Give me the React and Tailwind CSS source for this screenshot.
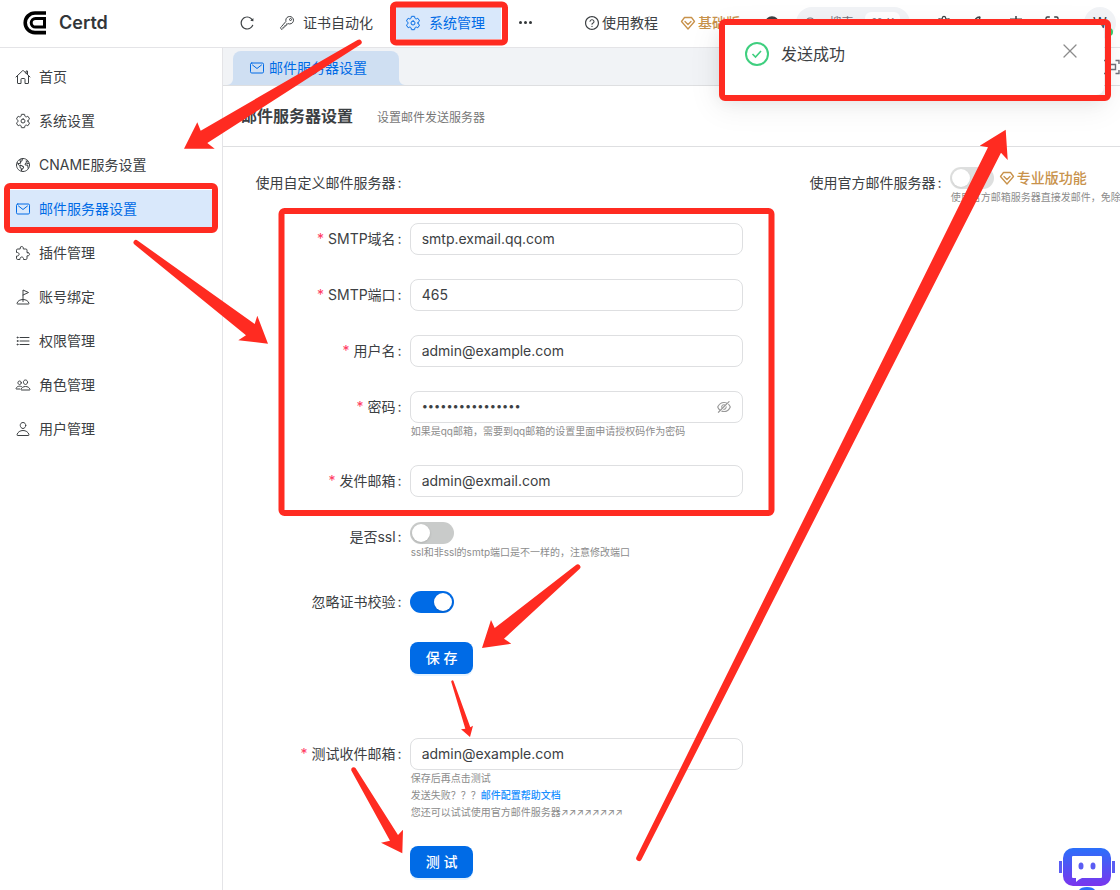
import React from 'react';
import {
  IoHomeOutline,
  IoSettingsOutline,
  IoEarthOutline,
  IoMailOutline,
  IoExtensionPuzzleOutline,
  IoGolfOutline,
  IoListOutline,
  IoPeopleOutline,
  IoPersonOutline,
  IoKeyOutline,
} from 'react-icons/io5';
import { AiOutlineQuestionCircle, AiOutlineReload, AiOutlineEyeInvisible, AiFillGithub } from 'react-icons/ai';
import { Search, Settings, Moon, Maximize, X } from 'lucide-react';

const menus = [
  { title: '首页', icon: IoHomeOutline },
  { title: '系统设置', icon: IoSettingsOutline },
  { title: 'CNAME服务设置', icon: IoEarthOutline },
  { title: '邮件服务器设置', icon: IoMailOutline, active: true },
  { title: '插件管理', icon: IoExtensionPuzzleOutline },
  { title: '账号绑定', icon: IoGolfOutline },
  { title: '权限管理', icon: IoListOutline },
  { title: '角色管理', icon: IoPeopleOutline },
  { title: '用户管理', icon: IoPersonOutline },
];

const Logo = () => (
  <svg className="h-6 w-6 shrink-0" viewBox="0 0 24 24" fill="none" stroke="#000">
    <path d="M23 2H12a9.800 9.800 0 0 0 0 19.600h11" strokeWidth="3.600" />
    <path d="M23 7.500H12.500a4.300 4.300 0 0 0 0 8.600H21.500V7.500" strokeWidth="3" />
  </svg>
);

const VipIcon = () => (
  <svg className="h-4 w-4 shrink-0" viewBox="0 0 16 16" fill="none" stroke="currentColor" strokeWidth="1.300" strokeLinejoin="round">
    <path d="M4.500 2.500h7L14.500 6.500 8 14 1.500 6.500z" />
    <path d="M5 6.500 8 9.500l3-3" strokeLinecap="round" />
  </svg>
);

const LanguageIcon = () => (
  <svg className="h-4 w-4" viewBox="0 0 16 16" fill="none" stroke="currentColor" strokeWidth="1.500">
    <path d="M8 1v3M2 4.200h12M4 5c1 4 4 7.500 9 9M12 5c-1 4-4 7.500-9 9" />
  </svg>
);

const Header = () => (
  <header className="flex h-12 items-center overflow-hidden border-b border-[#e4e4e7] pb-[2px] whitespace-nowrap">
    <a href="#" className="flex w-[231px] shrink-0 items-center gap-3 pl-[23px]">
      <Logo />
      <span className="text-lg font-semibold text-[#323639]">Certd</span>
    </a>
    <button aria-label="刷新" className="flex h-8 w-8 shrink-0 items-center justify-center">
      <AiOutlineReload className="h-4 w-4" />
    </button>
    <nav className="ml-4 flex shrink-0 items-center">
      <a href="#" className="flex h-8 items-center gap-2">
        <IoKeyOutline className="h-4 w-4" />
        证书自动化
      </a>
      <a href="#" className="ml-[23px] flex h-8 items-center gap-2 bg-[#d9e8fb] pr-4 pl-[9px] text-[#006be6]">
        <IoSettingsOutline className="h-4 w-4" />
        系统管理
      </a>
      <button aria-label="更多" className="ml-4 flex w-4 items-center justify-center gap-[2px]">
        <span className="h-[3px] w-[3px] rounded-full bg-[#323639]" />
        <span className="h-[3px] w-[3px] rounded-full bg-[#323639]" />
        <span className="h-[3px] w-[3px] rounded-full bg-[#323639]" />
      </button>
    </nav>
    <div className="ml-auto flex shrink-0 items-center pr-1">
      <a href="#" className="flex items-center gap-[2px]">
        <AiOutlineQuestionCircle className="h-4 w-4" />
        使用教程
      </a>
      <a href="#" className="ml-[22px] flex items-center gap-[2px] font-medium text-[#c8924b]">
        <VipIcon />
        基础版
      </a>
      <button aria-label="GitHub" className="ml-6 flex w-4 justify-center">
        <AiFillGithub className="h-4 w-4" />
      </button>
      <button className="ml-4 flex h-8 w-[114px] items-center gap-3 rounded-2xl bg-[#f1f3f6] pr-[10px] pl-2 text-xs text-[#71717a]">
        <Search className="h-4 w-4" />
        搜索
        <kbd className="rounded-md bg-white px-[6px] py-[3px] font-sans">⌘ K</kbd>
      </button>
      <div className="ml-[26px] flex items-center gap-5">
        <Settings className="h-4 w-4" />
        <Moon className="h-4 w-4" />
        <LanguageIcon />
        <Maximize className="h-4 w-4" />
      </div>
      <div className="relative ml-6 flex h-8 w-8 items-center justify-center rounded-full bg-[#f1f3f6] text-sm">
        W
        <span className="absolute right-[3px] bottom-[3px] h-2 w-2 rounded-full bg-[#3bc96b]" />
      </div>
    </div>
  </header>
);

const Sidebar = () => (
  <aside className="w-[223px] shrink-0 border-r border-[#e4e4e7] pt-[10px]">
    <ul className="flex flex-col gap-[6px] px-[10px]">
      {menus.map(({ title, icon: Icon, active }) => (
        <li key={title}>
          <a href="#" className={`flex h-[38px] items-center gap-2 pl-[5px] ${active ? 'bg-[#d9e8fb] text-[#006be6]' : ''}`}>
            <Icon className="h-4 w-4" />
            {title}
          </a>
        </li>
      ))}
    </ul>
  </aside>
);

const TabCurve = ({ className }) => (
  <svg className={`absolute bottom-0 h-[6px] w-[6px] ${className}`} viewBox="0 0 6 6" fill="#cfdff2">
    <path d="M6 0v6H0a6 6 0 0 0 6-6z" />
  </svg>
);

const TabBar = () => (
  <div className="flex h-[38px] items-end border-b border-[#dedfe1] bg-[#f1f3f6] pl-[10px]">
    <a href="#" className="relative flex h-[34px] items-center gap-1 rounded-t-lg bg-[#cfdff2] pr-8 pl-4 text-[#006be6]">
      <TabCurve className="-left-[6px]" />
      <IoMailOutline className="h-4 w-4" />
      邮件服务器设置
      <TabCurve className="-right-[6px] -scale-x-100" />
    </a>
    <button aria-label="全屏" className="ml-auto flex h-full w-9 items-center justify-end border-l border-[#dedfe1] bg-white text-[#71717a]">
      <svg className="h-4 w-5" viewBox="0 0 20 16" fill="none" stroke="currentColor" strokeWidth="1.400">
        <path d="M6 1.500H2.500V5M2.500 11v3.500H6M15.500 1.500H19V5M19 11v3.500h-3.500M6 5.500h9.500v5H6z" />
      </svg>
    </button>
  </div>
);

const FormRow = ({ label, required, htmlFor, className = 'mb-6', children }) => (
  <div className={`flex ${className}`}>
    <div className="flex h-8 w-1/3 shrink-0 items-center justify-end pr-2 whitespace-nowrap">
      {required && <span className="mr-1 text-[#ff3860]">*</span>}
      {label && <label htmlFor={htmlFor}>{label}</label>}
      {label && <span className="ml-[2px]">:</span>}
    </div>
    <div className="w-2/3">{children}</div>
  </div>
);

const TextInput = ({ className = 'text-sm', ...props }) => (
  <input
    {...props}
    className={`block h-8 w-full rounded-lg border border-[#dedfe1] bg-white px-[11px] pb-[2px] outline-none ${className}`}
  />
);

const Switch = ({ id, defaultChecked }) => (
  <span className="relative inline-block h-[22px] w-11 align-top">
    <input
      id={id}
      type="checkbox"
      role="switch"
      defaultChecked={defaultChecked}
      className="peer block h-full w-full appearance-none rounded-full bg-[#c9cbca] checked:bg-[#006be6]"
    />
    <span className="pointer-events-none absolute top-[2px] left-[2px] h-[18px] w-[18px] rounded-full bg-white shadow peer-checked:left-6" />
  </span>
);

const Helper = ({ children }) => (
  <div className="pb-px pl-px text-[10px] leading-[17px] whitespace-nowrap text-[#8c8c8c]">{children}</div>
);

const PrimaryButton = ({ children }) => (
  <button type="button" className="block h-8 rounded-lg bg-[#006be6] px-4 font-medium text-white shadow-[0_2px_0_#e6f4ff]">
    {children}
  </button>
);

const EmailForm = () => (
  <div className="grid min-w-[1080px] grid-cols-2">
    <form className="p-5">
      <FormRow label="使用自定义邮件服务器" />
      <FormRow label="SMTP域名" required htmlFor="host">
        <TextInput id="host" defaultValue="smtp.exmail.qq.com" />
      </FormRow>
      <FormRow label="SMTP端口" required htmlFor="port">
        <TextInput id="port" defaultValue="465" />
      </FormRow>
      <FormRow label="用户名" required htmlFor="user">
        <TextInput id="user" defaultValue="admin@example.com" />
      </FormRow>
      <FormRow label="密码" required htmlFor="pass">
        <div className="relative">
          <TextInput id="pass" type="password" className="text-[11px]" defaultValue="abcdefgh12345678" />
          <AiOutlineEyeInvisible className="absolute top-2 right-[11px] h-4 w-4 text-[#999]" />
        </div>
        <Helper>如果是qq邮箱，需要到qq邮箱的设置里面申请授权码作为密码</Helper>
      </FormRow>
      <FormRow label="发件邮箱" required htmlFor="sender">
        <TextInput id="sender" defaultValue="admin@exmail.com" />
      </FormRow>
      <FormRow label="是否ssl" htmlFor="ssl">
        <div className="pt-px">
          <Switch id="ssl" />
          <Helper>ssl和非ssl的smtp端口是不一样的，注意修改端口</Helper>
        </div>
      </FormRow>
      <FormRow label="忽略证书校验" htmlFor="ignore">
        <div className="flex h-8 items-center">
          <Switch id="ignore" defaultChecked />
        </div>
      </FormRow>
      <FormRow className="mb-16">
        <PrimaryButton>保 存</PrimaryButton>
      </FormRow>
      <FormRow label="测试收件邮箱" required htmlFor="receiver">
        <TextInput id="receiver" defaultValue="admin@example.com" />
        <Helper>
          <p>保存后再点击测试</p>
          <p>
            发送失败？？？
            <a href="#" className="font-medium text-[#1890ff]">邮件配置帮助文档</a>
          </p>
          <p>您还可以试试使用官方邮件服务器↗↗↗↗↗↗↗↗</p>
        </Helper>
      </FormRow>
      <FormRow className="mb-0">
        <PrimaryButton>测 试</PrimaryButton>
      </FormRow>
    </form>
    <form className="p-5">
      <FormRow label="使用官方邮件服务器" htmlFor="official">
        <div className="flex h-[22px] items-center gap-[5px]">
          <span className="opacity-60">
            <Switch id="official" />
          </span>
          <a href="#" className="flex items-center gap-[2px] font-medium text-[#c8924b]">
            <VipIcon />
            专业版功能
          </a>
        </div>
        <Helper>使用官方邮箱服务器直接发邮件，免除繁琐的配置</Helper>
      </FormRow>
    </form>
  </div>
);

const Notice = () => (
  <div role="alert" className="absolute top-6 right-4 flex h-[71px] w-96 rounded-lg bg-white pr-6 pl-[25px] pt-[18px] shadow-[0_6px_16px_rgba(0,0,0,0.08),0_9px_28px_8px_rgba(0,0,0,0.05)]">
    <svg className="h-6 w-6" viewBox="0 0 24 24" fill="none" stroke="#3fcf7f" strokeWidth="2">
      <circle cx="12" cy="12" r="11" />
      <path d="m7.500 12 3 3 5.500-6" strokeWidth="1.600" />
    </svg>
    <span className="ml-3 text-base">发送成功</span>
    <button aria-label="关闭" className="ml-auto flex h-[18px] w-5 items-center justify-center text-[#8c8c8c]">
      <X className="h-6 w-6 shrink-0" strokeWidth={1.3} />
    </button>
  </div>
);

const ChatRobot = () => (
  <svg className="fixed right-1 bottom-0 h-[43px] w-[58px]" viewBox="0 0 58 43">
    <defs>
      <linearGradient id="robot" x1="0" y1="0" x2="0" y2="1">
        <stop offset="0" stopColor="#2b70fa" />
        <stop offset="1" stopColor="#7a35ee" />
      </linearGradient>
    </defs>
    <rect x="1" y="14" width="3" height="12" fill="#5a5cf3" />
    <rect x="54" y="14" width="3" height="12" fill="#5a5cf3" />
    <rect x="5" y="1" width="48" height="38" rx="10" fill="url(#robot)" />
    <path d="M15 9h28q1 0 1 1v20q0 1-1 1H24q-3 1-6 4v-4h-3q-1 0-1-1V10q0-1 1-1z" fill="#fff" />
    <ellipse cx="23" cy="19" rx="2.500" ry="3.500" fill="#5a5cf3" />
    <ellipse cx="35" cy="19" rx="2.500" ry="3.500" fill="#5a5cf3" />
    <path d="M21 43q2-3 8-3t8 3z" fill="#2b70fa" />
  </svg>
);

// red frames and arrows of the tutorial, drawn over the page
const Annotations = () => (
  <svg className="pointer-events-none absolute top-0 left-0 h-[890px] w-[1120px]" viewBox="0 0 1120 890" fill="#ff2b21" stroke="#ff2b21">
    <g fill="none" strokeWidth="6">
      <rect x="393" y="4.500" width="112" height="38" rx="3" />
      <rect x="7" y="186" width="208" height="44" rx="3" />
      <rect x="281.500" y="211" width="490" height="302" rx="3" />
      <rect x="722" y="22" width="386" height="76" rx="3" />
    </g>
    <g stroke="none">
      <path d="M357.500 40 200.700 130.700 197.300 122.300 184 148.700H214.700L207.300 143 360.500 44.500A2.500 2.500 0 0 0 357.500 40z" />
      <path d="M137.500 240.500 254.700 324 257.300 315.700 268 343.700 238.300 340.300 246 335.300 134.500 244.500A2.500 2.500 0 0 1 137.500 240.500z" />
      <path d="M576 565 494.700 628 491 620 482 648 511.300 643.700 504 638.700 579.500 569A2.500 2.500 0 0 0 576 565z" />
      <path d="M453.500 681 470.300 727.300 473 725.700 470 737 461 729.300 465.300 728.700 451.300 682A1 1 0 0 1 453.500 681z" />
      <path d="M355.500 768 398 835 403 829.700 402.300 853.300 381 842.700 390 840.700 351.300 770.500A2.500 2.500 0 0 1 355.500 768z" />
      <path d="M636.500 857 988 147.300 979.700 145.700 1005.700 129.700 1007.700 160 1001 152.700 641.500 859.500A2.500 2.500 0 0 1 636.500 857z" />
    </g>
  </svg>
);

export default function App() {
  return (
    <div className="relative flex min-h-screen flex-col overflow-hidden bg-white font-[Inter,'Noto_Sans_CJK_SC',sans-serif] text-sm text-[#3c4043]">
      <Header />
      <div className="flex flex-1">
        <Sidebar />
        <main className="min-w-0 flex-1">
          <TabBar />
          <div className="flex h-[61px] items-center border-b border-[#dedfe1] pl-[18px]">
            <div className="flex items-baseline gap-6">
              <h1 className="text-base font-bold">邮件服务器设置</h1>
              <p className="text-xs text-[#777]">设置邮件发送服务器</p>
            </div>
          </div>
          <EmailForm />
        </main>
      </div>
      <Notice />
      <ChatRobot />
      <Annotations />
    </div>
  );
}
